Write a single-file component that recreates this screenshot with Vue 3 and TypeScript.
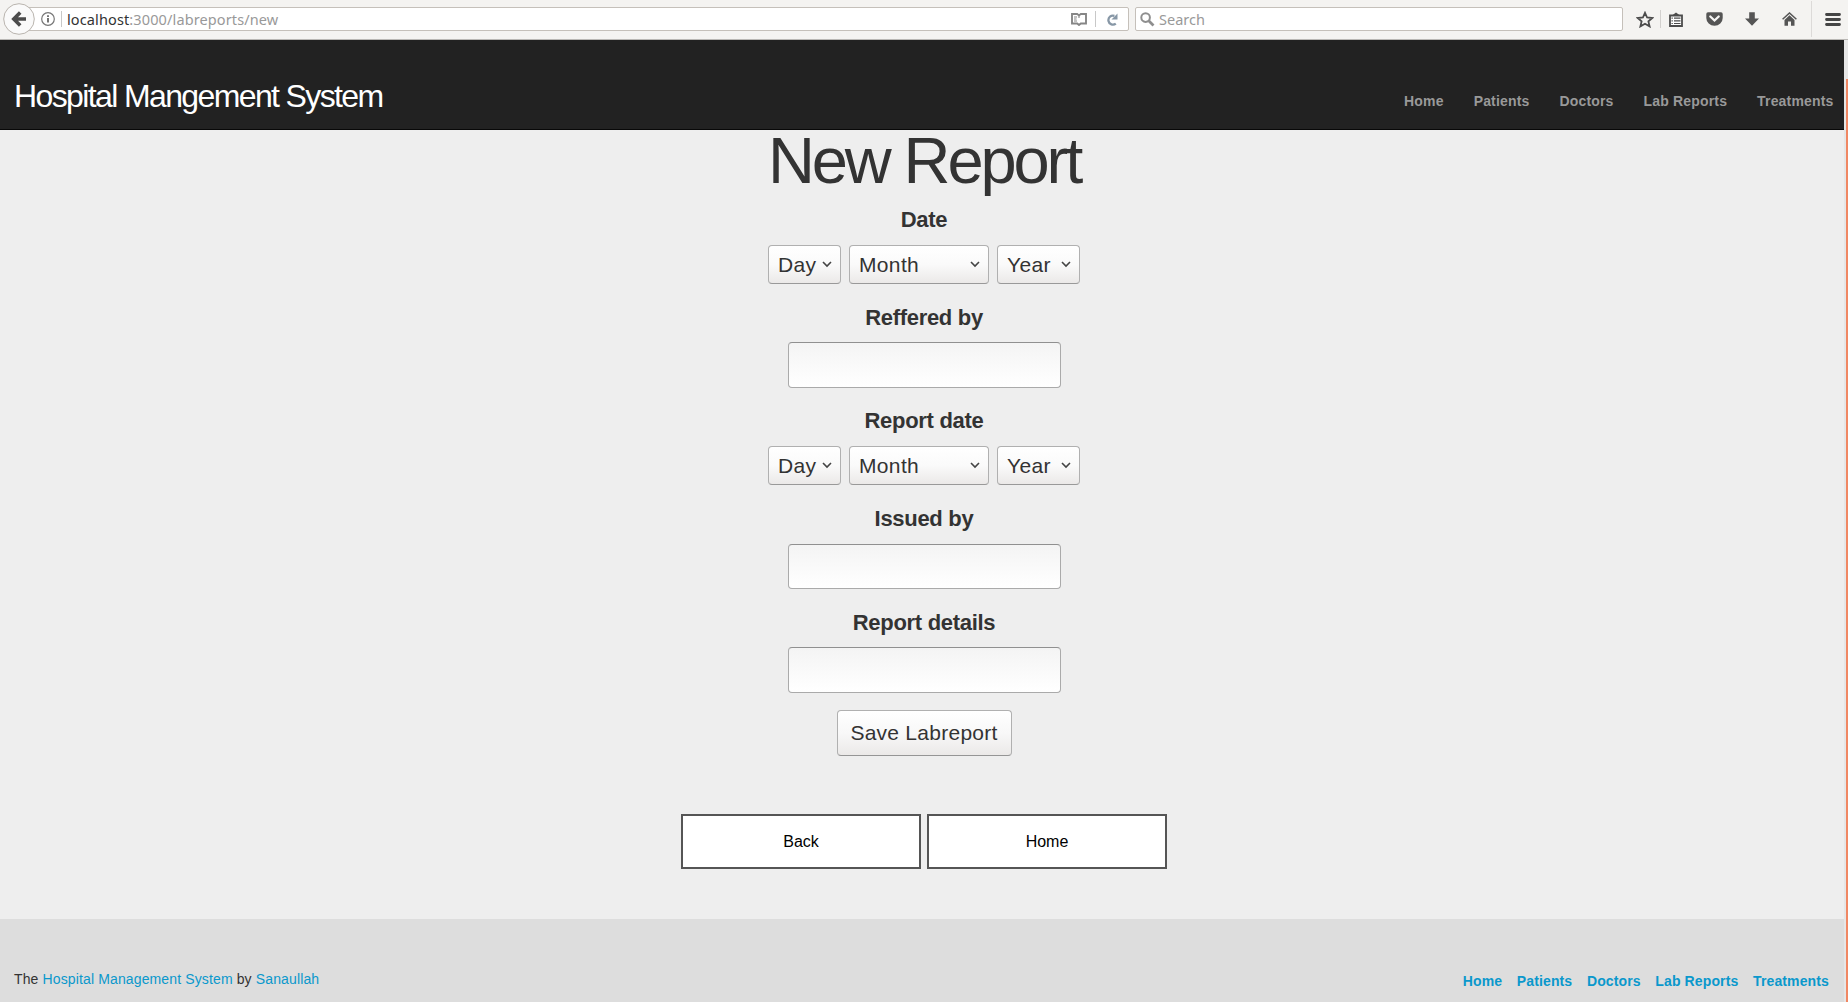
<script setup lang="ts">
interface DateField {
  label: string
  kind: 'date'
}
interface TextField {
  label: string
  kind: 'text'
}
type Field = DateField | TextField

const links: string[] = ['Home', 'Patients', 'Doctors', 'Lab Reports', 'Treatments']
const fields: Field[] = [
  { label: 'Date', kind: 'date' },
  { label: 'Reffered by', kind: 'text' },
  { label: 'Report date', kind: 'date' },
  { label: 'Issued by', kind: 'text' },
  { label: 'Report details', kind: 'text' },
]
const parts: string[] = ['Day', 'Month', 'Year']
</script>

<template>
  <div class="window">
    <div class="toolbar">
      <div class="back">
        <svg width="32" height="32" viewBox="0 0 32 32">
          <circle cx="16" cy="16" r="15.3" fill="#fafafa" stroke="#b9b4ae" />
          <path d="M23 16H12M17.2 9.6L10.8 16l6.4 6.4" fill="none" stroke="#4c4c4c" stroke-width="3.6" />
        </svg>
      </div>
      <div class="urlbar">
        <svg class="info" width="14" height="14" viewBox="0 0 14 14">
          <circle cx="7" cy="7" r="6.3" fill="none" stroke="#777" stroke-width="1.2" />
          <path d="M7 6v4.6M7 3.2v1.8" stroke="#666" stroke-width="1.8" />
        </svg>
        <span class="rule"></span>
        <span class="url"><b>localhost</b>:3000/labreports/new</span>
        <svg class="reader" width="16" height="13" viewBox="0 0 16 13">
          <path d="M1 1h5.2L8 2.4 9.8 1H15v9.5H9.8L8 12l-1.8-1.5H1z" fill="none" stroke="#868686" stroke-width="1.9" />
          <path d="M8 3v2M3 4h3M3 6h2.600M3 8h3" stroke="#868686" stroke-width="1.100" />
        </svg>
        <span class="rule"></span>
        <svg class="reload" width="12" height="13" viewBox="0 0 12 13">
          <path d="M9.800 10.600A4.500 4.500 0 1 1 8.400 2.900" fill="none" stroke="#8797a6" stroke-width="2.300" />
          <path d="M11.500.5v6H5.500z" fill="#8797a6" />
        </svg>
      </div>
      <div class="searchbar">
        <svg width="15" height="15" viewBox="0 0 15 15">
          <circle cx="5.600" cy="5.600" r="4.300" fill="none" stroke="#8e8e8e" stroke-width="2" />
          <path d="M8.700 8.700l4.800 4.800" stroke="#8e8e8e" stroke-width="2.700" />
        </svg>
        <span>Search</span>
      </div>
      <div class="tools">
        <svg class="star" width="18" height="17" viewBox="0 0 18 17">
          <path d="M9 1.800l2.100 4.700 5.200.5-3.900 3.400 1.200 5L9 12.700l-4.600 2.700 1.200-5L1.700 7l5.200-.5z" fill="none" stroke="#4c4c4c" stroke-width="1.800" />
        </svg>
        <span class="rule light"></span>
        <svg class="list" width="14" height="15" viewBox="0 0 14 15">
          <path d="M1 3.500h12V14H1z" fill="#fff" stroke="#4c4c4c" stroke-width="1.800" />
          <path d="M3 3.500L7 .4l4 3.100z" fill="#4c4c4c" />
          <path d="M2.500 6.200h1.300M2.500 8.900h1.300M2.500 11.500h1.300M5 6.200h6.500M5 8.900h6.500M5 11.500h6.500" stroke="#4c4c4c" stroke-width="1.200" />
        </svg>
        <svg class="pocket" width="17" height="14" viewBox="0 0 17 14">
          <path d="M2 .3h13q1.700 0 1.700 1.700v4a8.200 7.800 0 0 1-16.400 0V2Q.3.300 2 .3z" fill="#555" />
          <path d="M4.300 4.500l4.200 4 4.200-4" fill="none" stroke="#f6f5f4" stroke-width="2.300" stroke-linecap="round" />
        </svg>
        <svg class="download" width="14" height="14" viewBox="0 0 14 14">
          <path d="M4.200.2h5.600v6.300H14l-7 7.300-7-7.300h4.200z" fill="#555" />
        </svg>
        <svg class="house" width="15" height="14" viewBox="0 0 15 14">
          <path d="M.6 7.300L7.500 1l6.900 6.300" fill="none" stroke="#555" stroke-width="1.500" />
          <path d="M2.500 8l5-4.700 5 4.700v5.800H9V9.500H6v4.300H2.500z" fill="#555" />
        </svg>
        <span class="menu-rule"></span>
        <svg class="menu" width="16" height="13" viewBox="0 0 16 13">
          <path d="M1.500 1.500h13M1.500 6.500h13M1.500 11.500h13" stroke="#454545" stroke-width="2.800" stroke-linecap="round" />
        </svg>
      </div>
    </div>

    <div class="viewport">
      <div class="page">
        <header>
          <a class="logo">Hospital Mangement System</a>
          <nav>
            <a v-for="link in links" :key="link">{{ link }}</a>
          </nav>
        </header>

        <main>
          <h1>New Report</h1>
          <form>
            <div v-for="field in fields" :key="field.label" class="field" :class="field.kind">
              <label>{{ field.label }}</label>
              <div v-if="field.kind === 'date'" class="selects">
                <div v-for="part in parts" :key="part" class="select" :class="part.toLowerCase()">
                  <span>{{ part }}</span>
                  <svg width="10" height="7" viewBox="0 0 10 7">
                    <path d="M1 1l4 4 4-4" fill="none" stroke="#444" stroke-width="1.600" />
                  </svg>
                </div>
              </div>
              <div v-else class="input"></div>
            </div>
            <div class="save">Save Labreport</div>
          </form>
          <div class="actions">
            <a>Back</a>
            <a>Home</a>
          </div>
        </main>

        <footer>
          <p>The <a>Hospital Management System</a> by <a>Sanaullah</a></p>
          <nav>
            <a v-for="link in links" :key="link">{{ link }}</a>
          </nav>
        </footer>
      </div>
      <div class="scrollbar"><div class="thumb"></div></div>
    </div>
  </div>
</template>

<style>
body {
  margin: 0;
  overflow: hidden;
}
</style>

<style scoped>
* {
  box-sizing: border-box;
}
.window {
  width: 1848px;
  height: 1002px;
  display: flex;
  flex-direction: column;
  overflow: hidden;
  font-family: "Liberation Sans", Arial, sans-serif;
  font-size: 14px;
  color: #333;
}
svg {
  display: block;
  flex: none;
}

.toolbar {
  height: 40px;
  flex: none;
  display: flex;
  align-items: flex-start;
  background: #f4f3f1;
  border-bottom: 1px solid #b9b7b4;
  font-family: "Noto Sans", "Open Sans", sans-serif;
  font-size: 14.5px;
  color: #999;
}
.back {
  position: relative;
  z-index: 1;
  margin: 3px 0 0 3px;
}
.urlbar {
  width: 1107px;
  height: 24px;
  margin: 7px 0 0 -13px;
  padding-left: 18px;
  display: flex;
  align-items: center;
  background: #fff;
  border: 1px solid #c5c0ba;
  border-radius: 2px;
}
.rule {
  width: 1px;
  height: 16px;
  background: #c8c8c8;
}
.info + .rule {
  margin: 0 5px 0 6px;
}
.url {
  flex: 1;
  line-height: 22px;
  letter-spacing: 0.12px;
  white-space: nowrap;
}
.url b {
  font-weight: 400;
  color: #333;
}
.reader {
  margin-right: 8px;
}
.reload {
  margin: 0 10px;
}
.searchbar {
  width: 488px;
  height: 24px;
  margin: 7px 0 0 6px;
  padding-left: 4px;
  display: flex;
  align-items: center;
  gap: 4px;
  background: #fff;
  border: 1px solid #c5c0ba;
  border-radius: 2px;
  line-height: 22px;
}
.tools {
  height: 38px;
  flex: 1;
  display: flex;
  align-items: center;
}
.star {
  margin: 0 6px 0 13px;
}
.rule.light {
  height: 18px;
  background: #d2d0ce;
}
.list {
  margin-left: 8px;
}
.pocket {
  margin-left: 23px;
}
.download {
  margin-left: 22px;
}
.house {
  margin-left: 23px;
}
.menu-rule {
  width: 1px;
  height: 36px;
  margin: 0 13px 0 14px;
  background: #dcdad8;
}

.viewport {
  flex: 1;
  display: flex;
  min-height: 0;
}
.page {
  width: 1844px;
  display: flex;
  flex-direction: column;
  background: #eee;
}
.scrollbar {
  width: 4px;
  padding: 39px 0 0 2px;
  background: #e6e6e6;
}
.thumb {
  height: 100%;
  background: #f08763;
}

header {
  height: 90px;
  flex: none;
  display: flex;
  justify-content: space-between;
  background: #222;
  border-bottom: 1px solid #080808;
}
.logo {
  margin: 37px 0 0 14px;
  font-size: 32px;
  line-height: 38px;
  letter-spacing: -1.62px;
  color: #fff;
}
header nav {
  display: flex;
  gap: 30px;
  margin: 51px 10.5px 0 0;
  font-weight: 700;
  line-height: 20px;
  letter-spacing: 0.17px;
  color: #999;
}

main {
  height: 789px;
  flex: none;
  padding-left: 4px;
  display: flex;
  flex-direction: column;
  align-items: center;
}
h1 {
  margin: 0;
  height: 75px;
  font-size: 65px;
  font-weight: 400;
  line-height: 61px;
  letter-spacing: -3.1px;
}
form {
  display: flex;
  flex-direction: column;
  align-items: center;
  font-size: 21px;
}
.field {
  display: flex;
  flex-direction: column;
  align-items: center;
}
.field.date {
  height: 98px;
}
.field.text {
  height: 103px;
}
.field:nth-child(4) {
  height: 104px;
}
.field:nth-child(5) {
  height: 102px;
}
label {
  font-size: 22px;
  font-weight: 700;
  line-height: 30px;
  letter-spacing: -0.3px;
}
.selects {
  display: flex;
  gap: 8px;
  margin-top: 10px;
}
.select {
  height: 39px;
  padding: 0 8px 0 9px;
  display: flex;
  align-items: center;
  justify-content: space-between;
  border: 1px solid #b0b0b0;
  border-bottom-color: #999;
  border-radius: 4px;
  background: linear-gradient(#fff, #fafafa 50%, #ebe9e8);
  letter-spacing: 0.35px;
}
.day {
  width: 73px;
}
.month {
  width: 140px;
}
.year {
  width: 83px;
}
.input {
  width: 273px;
  height: 46px;
  margin-top: 9px;
  border: 1px solid #aaa;
  border-top-color: #909090;
  border-radius: 4px;
  background: linear-gradient(#f4f4f4, #fff);
}
.field:nth-child(4) .input {
  height: 45px;
  margin-top: 10px;
}
.save {
  width: 175px;
  height: 46px;
  border: 1px solid #b0b0b0;
  border-bottom-color: #959595;
  border-radius: 4px;
  background: linear-gradient(#fff, #f8f8f8 50%, #ebe9e8);
  line-height: 44px;
  letter-spacing: 0.26px;
  text-align: center;
  white-space: nowrap;
}
.actions {
  display: flex;
  gap: 6px;
  margin-top: 58px;
}
.actions a {
  width: 240px;
  height: 55px;
  border: 2px solid #555;
  background: #fff;
  font-size: 16px;
  line-height: 51px;
  text-align: center;
  color: #000;
}

footer {
  flex: 1;
  display: flex;
  justify-content: space-between;
  background: #ddd;
  line-height: 20px;
}
footer p {
  margin: 50px 0 0 14px;
  letter-spacing: 0.13px;
}
footer a {
  color: #0a98cc;
}
footer nav {
  display: flex;
  gap: 14.6px;
  margin: 52px 15px 0 0;
  font-weight: 700;
  letter-spacing: 0.13px;
}
</style>
